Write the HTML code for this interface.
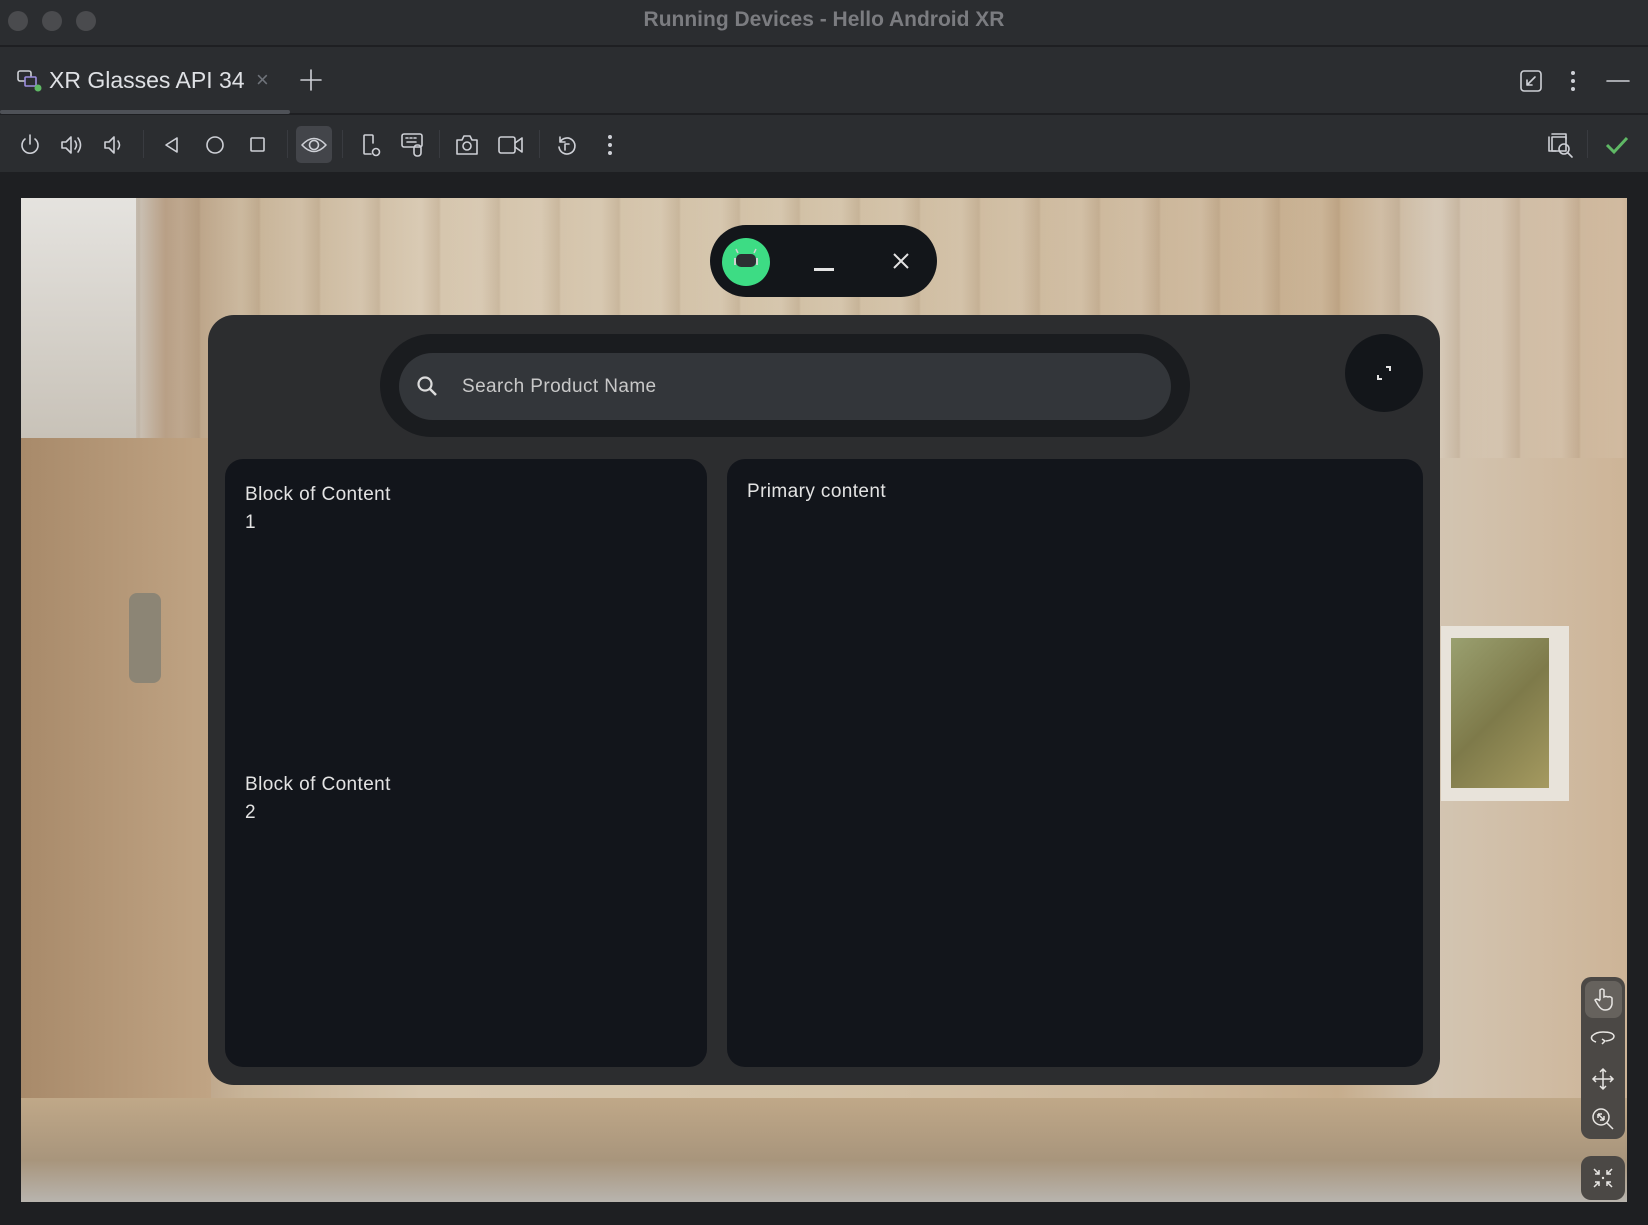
<!DOCTYPE html>
<html><head><meta charset="utf-8"><style>
*{margin:0;padding:0;box-sizing:border-box}
body{width:1648px;height:1225px;background:#1e1f22;font-family:"Liberation Sans",sans-serif;position:relative;overflow:hidden}
.abs{position:absolute}
svg{position:absolute;overflow:visible}
.ic{stroke:#ced0d6;fill:none;stroke-width:1.6;stroke-linecap:round;stroke-linejoin:round}
.sep{position:absolute;top:130px;width:1px;height:28px;background:#393b40}
.t{position:absolute;color:#e3e3e3;font-size:19px;letter-spacing:.4px}
</style></head><body>
<div class="abs" style="left:0;top:0;width:1648px;height:46px;background:#2b2d30;border-bottom:1px solid #1e1f22"></div>
<div class="abs" style="left:8px;top:11px;width:20px;height:20px;border-radius:50%;background:#4a4b4e"></div>
<div class="abs" style="left:42px;top:11px;width:20px;height:20px;border-radius:50%;background:#4a4b4e"></div>
<div class="abs" style="left:76px;top:11px;width:20px;height:20px;border-radius:50%;background:#4a4b4e"></div>
<div class="abs" style="left:0;top:8px;width:1648px;text-align:center;color:#7b7c80;font-size:21px;font-weight:bold">Running Devices - Hello Android XR</div>
<div class="abs" style="left:0;top:47px;width:1648px;height:67px;background:#2b2d30;border-bottom:1px solid #1e1f22"></div>
<svg style="left:17px;top:70px" width="24" height="22"><rect x="1" y="1" width="13" height="10" rx="2" class="ic"/><rect x="8" y="7" width="11" height="9" rx="1" fill="#2b2d30" stroke="#9d8fe0" stroke-width="1.6"/><circle cx="21" cy="18" r="3.5" fill="#5fb865"/></svg>
<div class="abs" style="left:49px;top:67px;color:#dfe1e5;font-size:23px">XR Glasses API 34</div>
<div class="abs" style="left:256px;top:67px;color:#6f737a;font-size:22px">×</div>
<svg style="left:300px;top:69px" width="22" height="22"><path d="M11 1V21M1 11H21" class="ic" stroke-width="2"/></svg>
<div class="abs" style="left:0;top:110px;width:290px;height:4px;background:#4e5157;border-radius:2px"></div>
<svg style="left:1520px;top:70px" width="22" height="22"><rect x="1" y="1" width="20" height="20" rx="3" class="ic"/><path d="M15 7L7 15M7 10V15H12" class="ic"/></svg>
<svg style="left:1570px;top:70px" width="6" height="22"><circle cx="3" cy="3" r="2" fill="#ced0d6"/><circle cx="3" cy="11" r="2" fill="#ced0d6"/><circle cx="3" cy="19" r="2" fill="#ced0d6"/></svg>
<svg style="left:1606px;top:79px" width="24" height="4"><path d="M1 2H23" class="ic"/></svg>
<div class="abs" style="left:0;top:115px;width:1648px;height:58px;background:#2b2d30;border-bottom:1px solid #1e1f22"></div>
<svg style="left:19px;top:133px" width="22" height="24"><path d="M11 2V11M6 6A8 8 0 1 0 16 6" class="ic"/></svg>
<svg style="left:60px;top:134px" width="24" height="22"><path d="M2 8H6L11 3V19L6 14H2Z M15 7Q18 11 15 15M18 4Q23 11 18 18" class="ic"/></svg>
<svg style="left:103px;top:134px" width="22" height="22"><path d="M2 8H6L11 3V19L6 14H2Z M15 7Q18 11 15 15" class="ic"/></svg>
<div class="sep" style="left:143px"></div>
<svg style="left:164px;top:136px" width="16" height="18"><path d="M13 2V16L2 9Z" class="ic"/></svg>
<svg style="left:205px;top:135px" width="20" height="20"><circle cx="10" cy="10" r="8" class="ic"/></svg>
<svg style="left:250px;top:137px" width="16" height="16"><rect x="1" y="1" width="13" height="13" rx="1" class="ic"/></svg>
<div class="sep" style="left:287px"></div>
<div class="abs" style="left:296px;top:126px;width:36px;height:37px;background:#43454a;border-radius:5px"></div>
<svg style="left:300px;top:135px" width="28" height="20"><path d="M2 10Q14 -3 26 10Q14 23 2 10Z" class="ic"/><circle cx="14" cy="10" r="4.5" class="ic"/></svg>
<div class="sep" style="left:342px"></div>
<svg style="left:361px;top:133px" width="22" height="26"><path d="M10 21H4Q3 21 3 20V3Q3 2 4 2H11Q12 2 12 3V10" class="ic"/><circle cx="15" cy="19" r="3.5" class="ic"/></svg>
<svg style="left:401px;top:133px" width="24" height="26"><rect x="1" y="1" width="20" height="13" rx="2" class="ic"/><path d="M5 5H7M9 5H11M13 5H15M6 9H15" class="ic"/><rect x="13" y="12" width="7" height="11" rx="3" class="ic" fill="#2b2d30"/></svg>
<div class="sep" style="left:439px"></div>
<svg style="left:455px;top:134px" width="24" height="22"><path d="M2 6H7L9 2H15L17 6H22V20H2Z" class="ic"/><circle cx="12" cy="12" r="4" class="ic"/></svg>
<svg style="left:498px;top:135px" width="26" height="20"><rect x="1" y="2" width="16" height="16" rx="2" class="ic"/><path d="M17 8L24 3V17L17 12" class="ic"/></svg>
<div class="sep" style="left:539px"></div>
<svg style="left:555px;top:133px" width="22" height="24"><path d="M5 4V9H10M5 9A8 8 0 1 1 4 14" class="ic"/><path d="M10 17V11H14" class="ic"/></svg>
<svg style="left:607px;top:134px" width="6" height="22"><circle cx="3" cy="3" r="2" fill="#ced0d6"/><circle cx="3" cy="11" r="2" fill="#ced0d6"/><circle cx="3" cy="19" r="2" fill="#ced0d6"/></svg>
<svg style="left:1548px;top:133px" width="26" height="26"><path d="M1 4V18H8M4 1H18V6" class="ic"/><rect x="4" y="4" width="14" height="14" class="ic" fill="#2b2d30"/><circle cx="16" cy="16" r="5" class="ic" fill="#2b2d30"/><path d="M20 20L24 24" class="ic"/></svg>
<div class="sep" style="left:1587px"></div>
<svg style="left:1605px;top:135px" width="24" height="20"><path d="M2 10L9 17L22 3" stroke="#5fb865" stroke-width="3" fill="none"/></svg>
<div class="abs" style="left:21px;top:198px;width:1606px;height:1004px;overflow:hidden;background:linear-gradient(90deg,#d8d4cc 0,#cfc9c0 7%,#b59b80 9%,#c8b498 14%,#d6c6ae 25%,#d2c1a6 50%,#cdb89c 70%,#c6ad8d 82%,#d3c5b2 88%,#cdb497 100%)">
 <div class="abs" style="left:0;top:0;width:1606px;height:260px;background:repeating-linear-gradient(90deg,rgba(255,255,255,0) 0,rgba(255,255,255,.08) 40px,rgba(120,90,60,.12) 58px,rgba(255,255,255,0) 60px)"></div>
 <div class="abs" style="left:0;top:0;width:115px;height:240px;background:linear-gradient(180deg,#e5e3df,#c8c2b8)"></div>
 <div class="abs" style="left:0;top:240px;width:190px;height:764px;background:linear-gradient(90deg,#a88a6a,#c0a484)"></div>
 <div class="abs" style="left:108px;top:395px;width:32px;height:90px;border-radius:8px;background:#8c8575"></div>
 <div class="abs" style="left:1420px;top:428px;width:128px;height:175px;background:#e8e3da"></div>
 <div class="abs" style="left:1430px;top:440px;width:98px;height:150px;background:linear-gradient(135deg,#9aa070,#7e7a4a 50%,#a59a60)"></div>
 <div class="abs" style="left:0;top:900px;width:1606px;height:104px;background:linear-gradient(180deg,#c0a888,#a8957c 60%,#b8b4ae)"></div>
</div>
<div class="abs" style="left:710px;top:225px;width:227px;height:72px;border-radius:36px;background:#13161a"></div>
<div class="abs" style="left:722px;top:238px;width:48px;height:48px;border-radius:50%;background:#3ddc84"></div>
<svg style="left:732px;top:249px" width="28" height="24"><path d="M6 4L4 0M22 4L24 0" stroke="#cfd3d0" stroke-width="1.5"/><rect x="4" y="5" width="20" height="13" rx="5" fill="#2c2f33"/><path d="M3 9V16M25 9V16" stroke="#cfd3d0" stroke-width="2"/></svg>
<div class="abs" style="left:814px;top:268px;width:20px;height:3px;background:#e3e3e3"></div>
<svg style="left:893px;top:253px" width="16" height="16"><path d="M1 1L15 15M15 1L1 15" stroke="#e3e3e3" stroke-width="2"/></svg>
<div class="abs" style="left:208px;top:315px;width:1232px;height:770px;border-radius:26px;background:#2c2d2f"></div>
<div class="abs" style="left:380px;top:334px;width:810px;height:103px;border-radius:52px;background:#1a1c1f"></div>
<div class="abs" style="left:399px;top:353px;width:772px;height:67px;border-radius:34px;background:#33363a"></div>
<svg style="left:416px;top:375px" width="24" height="24"><circle cx="9" cy="9" r="6.5" stroke="#dcdcdc" stroke-width="2.2" fill="none"/><path d="M14 14L20 20" stroke="#dcdcdc" stroke-width="2.5"/></svg>
<div class="t" style="left:462px;top:376px;color:#c8c8c8">Search Product Name</div>
<div class="abs" style="left:1345px;top:334px;width:78px;height:78px;border-radius:50%;background:#13161a"></div>
<svg style="left:1376px;top:365px" width="16" height="16"><path d="M10 2H14V6M2 10V14H6" stroke="#e3e3e3" stroke-width="2" fill="none"/></svg>
<div class="abs" style="left:225px;top:459px;width:482px;height:608px;border-radius:18px;background:#12151b"></div>
<div class="abs" style="left:727px;top:459px;width:696px;height:608px;border-radius:18px;background:#12151b"></div>
<div class="t" style="left:245px;top:481px;line-height:28px">Block of Content<br>1</div>
<div class="t" style="left:245px;top:771px;line-height:28px">Block of Content<br>2</div>
<div class="t" style="left:747px;top:481px">Primary content</div>
<div class="abs" style="left:1581px;top:977px;width:44px;height:162px;border-radius:10px;background:#4b4845"></div>
<div class="abs" style="left:1585px;top:981px;width:37px;height:37px;border-radius:8px;background:#66625d"></div>
<svg style="left:1592px;top:986px" width="24" height="26"><path d="M8 14V4Q10 2 12 4V11Q14 10 16 11Q18 10 20 12V18Q19 24 13 24Q9 24 6 19L3 14Q5 12 8 15" stroke="#e8e6e3" stroke-width="1.5" fill="none"/></svg>
<svg style="left:1590px;top:1030px" width="26" height="16"><path d="M6 12Q0 10 2 6Q6 2 13 2Q23 2 24 6Q24 10 16 11M12 9L15 11L12 14" stroke="#e8e6e3" stroke-width="1.5" fill="none"/></svg>
<svg style="left:1592px;top:1068px" width="22" height="22"><path d="M11 1V21M1 11H21M8 4L11 1L14 4M8 18L11 21L14 18M4 8L1 11L4 14M18 8L21 11L18 14" stroke="#e8e6e3" stroke-width="1.5" fill="none"/></svg>
<svg style="left:1591px;top:1107px" width="24" height="24"><circle cx="10" cy="10" r="8" stroke="#e8e6e3" stroke-width="1.5" fill="none"/><path d="M16 16L22 22M7 7L13 13M7 7H11M7 7V11M13 13H9M13 13V9" stroke="#e8e6e3" stroke-width="1.5" fill="none"/></svg>
<div class="abs" style="left:1581px;top:1156px;width:44px;height:44px;border-radius:10px;background:#4b4845"></div>
<svg style="left:1592px;top:1167px" width="22" height="22"><path d="M2 2L7 7M7 3V7H3M20 2L15 7M15 3V7H19M2 20L7 15M3 15H7V19M20 20L15 15M19 15H15V19" stroke="#e8e6e3" stroke-width="1.5" fill="none"/><circle cx="11" cy="11" r="1.2" fill="#e8e6e3"/></svg>
</body></html>
